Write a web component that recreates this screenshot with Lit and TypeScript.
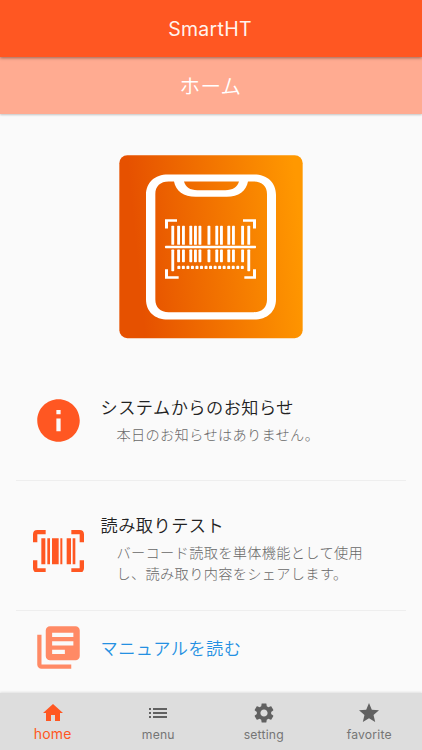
import { LitElement, html, css, svg } from "lit";
import { customElement } from "lit/decorators.js";
import { classMap } from "lit/directives/class-map.js";

const BAR_X = [184, 201.5, 216, 238, 252, 265.5, 292.5, 316, 330, 352, 366, 393.5, 412];

@customElement("app-logo")
export class AppLogo extends LitElement {
  static styles = css`
    :host { display: block; width: 184px; height: 184px; }
    svg { display: block; width: 184px; height: 184px; }
  `;
  render() {
    return html`<svg viewBox="27 30.5 552 552">
      <defs>
        <linearGradient id="g" x1="0" y1="0.1" x2="1" y2="0">
          <stop offset="0.05" stop-color="#e65100" />
          <stop offset="0.95" stop-color="#ff9800" />
        </linearGradient>
      </defs>
      <rect x="28" y="31" width="550" height="549" rx="24" fill="url(#g)" />
      <path fill="#fff" fill-rule="evenodd" d="M174 89H432C472 89 498 113 498 150V463C498 500 472 524 432 524H174C134 524 108 500 108 463V150C108 113 134 89 174 89Z
        M176 110C151 110 136 124 136 148V464C136 488 151 502 176 502H431C456 502 471 488 471 464V148C471 124 456 110 431 110H414C409 138 386 156 350 156H257C221 156 197 138 192 110Z
        M222 110C227 127 240 136 262 136H346C368 136 382 127 387 110Z" />
      <g fill="#fff">
        ${BAR_X.map((x, i) => {
          const edge = i === 0 || i === BAR_X.length - 1;
          return svg`<rect x=${x} y="243" width="8.6" height="57" rx="2" />
            <rect x=${x} y="314" width="8.6" height=${edge ? 65 : 38} rx="2" />`;
        })}
        ${Array.from({ length: 15 }, (_, i) => svg`<rect x=${202 + i * 13.6} y="363" width="9" height="9.5" rx="2.5" />`)}
        <rect x="165" y="303" width="273" height="7" rx="2" />
        <path d="M165 223.500h36v7.500h-27v20h-9zM438 223.500h-39v7.500h30v20h9zM165 401.500h41v-7.500h-32v-21h-9zM438 401.500h-35v-7.500h26v-21h9z" />
      </g>
    </svg>`;
  }
}

const infoIcon = html`<svg class="icon" viewBox="0 0 24 24"><path d="M12 2C6.480 2 2 6.480 2 12s4.480 10 10 10 10-4.480 10-10S17.520 2 12 2zm1 15h-2v-6h2v6zm0-8h-2V7h2v2z" /></svg>`;
const barcodeIcon = html`<svg class="icon scan" viewBox="39 74 153 128">
  <path d="M39 111V87Q39 74 52 74H77V87H52V111ZM192 111V87Q192 74 179 74H154V87H179V111ZM39 165V189Q39 202 52 202H77V189H52V165ZM192 165V189Q192 202 179 202H154V189H179V165Z" />
  <path d="M64 99h12v78H64zM82 99h8v78h-8zM96 99h20v78H96zM121 99h6v78h-6zM140 99h13v78h-13zM158 99h8v78h-8z" />
</svg>`;
const booksIcon = html`<svg class="icon pale" viewBox="0 0 24 24"><path d="M4 6H2v14c0 1.100.9 2 2 2h14v-2H4V6zm16-4H8c-1.100 0-2 .9-2 2v12c0 1.100.9 2 2 2h12c1.100 0 2-.9 2-2V4c0-1.100-.9-2-2-2zm-1 9H9V9h10v2zm-4 4H9v-2h6v2zm4-8H9V5h10v2z" /></svg>`;

const TABS = [
  { label: "home", path: "M10 20v-6h4v6h5v-8h3L12 3 2 12h3v8z" },
  { label: "menu", path: "M3 13h2v-2H3v2zm0 4h2v-2H3v2zm0-8h2V7H3v2zm4 4h14v-2H7v2zm0 4h14v-2H7v2zM7 7v2h14V7H7z" },
  { label: "setting", path: "M19.140 12.940c.04-.3.060-.61.060-.94 0-.32-.02-.64-.07-.94l2.030-1.580c.18-.14.230-.41.120-.61l-1.920-3.320c-.12-.22-.37-.29-.59-.22l-2.390.96c-.5-.38-1.030-.7-1.620-.94l-.36-2.540c-.04-.24-.24-.41-.48-.41h-3.840c-.24 0-.43.170-.47.410l-.36 2.540c-.59.240-1.130.570-1.620.940l-2.390-.96c-.22-.08-.47 0-.59.220L2.740 8.870c-.12.210-.08.470.120.610l2.030 1.580c-.05.300-.09.630-.09.940s.020.640.070.940l-2.030 1.580c-.18.140-.23.410-.12.610l1.920 3.320c.120.220.370.290.590.220l2.390-.96c.5.380 1.030.7 1.620.940l.36 2.540c.05.240.24.410.48.410h3.840c.24 0 .44-.17.470-.41l.36-2.540c.59-.24 1.130-.56 1.620-.94l2.390.96c.22.080.47 0 .59-.22l1.920-3.320c.12-.22.070-.47-.12-.61l-2.010-1.580zM12 15.600c-1.980 0-3.600-1.620-3.600-3.600s1.620-3.600 3.600-3.600 3.600 1.620 3.600 3.600-1.620 3.600-3.600 3.600z" },
  { label: "favorite", path: "M12 17.270L18.180 21l-1.640-7.030L22 9.240l-7.190-.61L12 2 9.190 8.630 2 9.240l5.460 4.730L5.820 21z" },
];

@customElement("app-root")
export class AppRoot extends LitElement {
  static styles = css`
    :host {
      display: flex; flex-direction: column; height: 750px; overflow: hidden;
      background: #fafafa; font-family: Inter, "Noto Sans CJK JP", sans-serif;
    }
    .bar {
      flex: none; height: 57px; box-sizing: border-box; padding-top: 1px;
      display: flex; align-items: center; justify-content: center;
      background: #ff5722; color: #fff3ee; font-size: 19.500px; letter-spacing: 0.3px;
      box-shadow: 0 1px 3px rgba(0, 0, 0, 0.4); z-index: 2; padding-right: 2px;
    }
    .sub {
      flex: none; height: 57px; box-sizing: border-box; padding: 0 1px 2px 0;
      display: flex; align-items: center; justify-content: center;
      background: #ffab91; color: #fff; font-family: "Noto Sans CJK JP", sans-serif;
      font-size: 20.500px; font-weight: 350; letter-spacing: 0.3px;
      box-shadow: 0 1px 2px rgba(0, 0, 0, 0.22); z-index: 1;
    }
    .content { flex: 1; min-height: 0; padding: 41px 16px 0; font-family: "Noto Sans CJK JP", sans-serif; }
    .hero { display: flex; justify-content: center; }
    .row {
      display: grid; grid-template-columns: 84.500px 1fr; box-sizing: border-box;
      border-bottom: 1px solid #eee;
    }
    .notice { height: 142px; padding-top: 56px; }
    .test { height: 130px; padding-top: 32px; }
    .manual { height: 81px; border-bottom: none; padding-top: 11px; }
    .lead { display: flex; width: 84px; justify-content: center; height: 51px; align-items: center; }
    .test .lead { height: 76px; }
    .icon { width: 51px; height: 51px; fill: #ff5722; }
    .scan { height: 42.670px; }
    .pale { fill: #ff8a65; }
    .title { font-size: 17.200px; line-height: 24px; letter-spacing: 0.48px; color: #222; font-weight: 350; }
    .desc { margin-top: 5px; font-size: 14.200px; line-height: 20.500px; letter-spacing: 0.34px; color: #686868; font-weight: 300; padding-left: 16px; }
    .link { color: #2490e2; line-height: 51px; }
    nav {
      flex: none; height: 57.500px; display: grid; grid-template-columns: repeat(4, 1fr);
      background: #ddd; box-shadow: 0 -1px 2px rgba(0, 0, 0, 0.1); z-index: 1;
    }
    .tab {
      display: flex; flex-direction: column; align-items: center; padding-top: 8px;
      color: #757575; font-size: 12.200px; line-height: 19px; letter-spacing: 0.2px;
    }
    .tab svg { width: 24px; height: 24px; fill: #616161; }
    .active { color: #ff5722; font-size: 14px; line-height: 17px; }
    .active svg { fill: #ff5722; }
  `;
  render() {
    return html`
      <header class="bar">SmartHT</header>
      <div class="sub">ホーム</div>
      <main class="content">
        <div class="hero"><app-logo></app-logo></div>
        <section class="row notice">
          <div class="lead">${infoIcon}</div>
          <div>
            <div class="title">システムからのお知らせ</div>
            <div class="desc">本日のお知らせはありません。</div>
          </div>
        </section>
        <section class="row test">
          <div class="lead">${barcodeIcon}</div>
          <div>
            <div class="title">読み取りテスト</div>
            <div class="desc">バーコード読取を単体機能として使用<br />し、読み取り内容をシェアします。</div>
          </div>
        </section>
        <section class="row manual">
          <div class="lead">${booksIcon}</div>
          <div class="title link">マニュアルを読む</div>
        </section>
      </main>
      <nav>
        ${TABS.map((t, i) => html`<div class=${classMap({ tab: true, active: i === 0 })}>
          <svg viewBox="0 0 24 24"><path d=${t.path} /></svg><span>${t.label}</span>
        </div>`)}
      </nav>
    `;
  }
}
